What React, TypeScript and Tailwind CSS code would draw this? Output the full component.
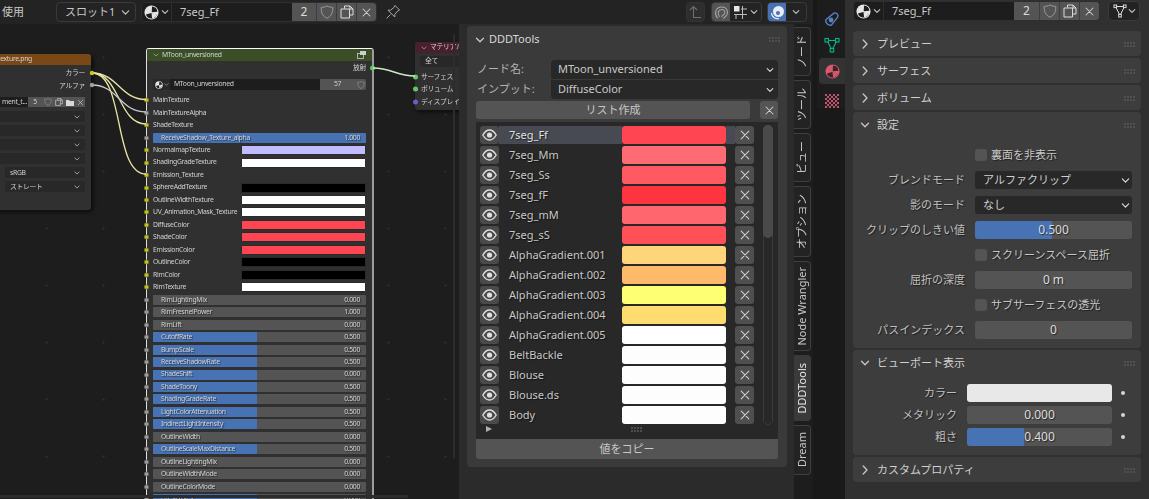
import React from "react";

const shadow = "[text-shadow:1px_1px_1px_rgba(0,0,0,0.55)]";

function MatIcon({ size = 16, light = "#e6e6e6", dark = "#1d1d1d" }: { size?: number; light?: string; dark?: string }) {
  return (
    <svg width={size} height={size} viewBox="0 0 16 16" className="shrink-0">
      <circle cx="8" cy="8" r="7.5" fill={light} />
      <path d="M8.2 7.8 L8.6 1.7 A6.3 6.3 0 0 1 14.3 7.2 Z" fill={dark} />
      <path d="M7.8 8.4 L13.6 10.6 A6.2 6.2 0 0 1 8 14.4 A6.4 6.4 0 0 1 2 10 Z" fill={dark} />
      <path d="M8 8.2 L13.6 10.4 A6.2 6.2 0 0 1 8.6 14.2 Z" fill={light} />
    </svg>
  );
}

function Chevron({ dir = "down", size = 10, color = "#c8c8c8", w = 1.3 }: { dir?: "down" | "right"; size?: number; color?: string; w?: number }) {
  return (
    <svg width={size} height={size} viewBox="0 0 10 10" className="shrink-0">
      <path d={dir === "down" ? "M1.5 3.2 L5 6.8 L8.5 3.2" : "M3.2 1 L7 5 L3.2 9"} fill="none" stroke={color} strokeWidth={w} strokeLinecap="round" strokeLinejoin="round" />
    </svg>
  );
}

function Cross({ size = 12, color = "#d0d0d0" }: { size?: number; color?: string }) {
  return (
    <svg width={size} height={size} viewBox="0 0 12 12" className="shrink-0">
      <path d="M2.2 2.2 L9.8 9.8 M9.8 2.2 L2.2 9.8" stroke={color} strokeWidth="1.1" strokeLinecap="round" />
    </svg>
  );
}

function Shield({ size = 14 }: { size?: number }) {
  return (
    <svg width={size} height={size} viewBox="0 0 14 14" className="shrink-0">
      <path d="M7 1 C5 2 3 2.4 1.2 2.4 C1.2 7 2 11 7 13.2 C12 11 12.8 7 12.8 2.4 C11 2.4 9 2 7 1 Z" fill="none" stroke="#9a9a9a" strokeWidth="1" />
    </svg>
  );
}

function CopyIcon({ size = 14 }: { size?: number }) {
  return (
    <svg width={size} height={size} viewBox="0 0 14 14" className="shrink-0">
      <path d="M4.5 3.5 V1 H10 L13 4 V10 H9.5 M10 1 V4 H13" fill="none" stroke="#dcdcdc" strokeWidth="1" />
      <path d="M1 4 H9.5 V13 H1 Z" fill="none" stroke="#dcdcdc" strokeWidth="1" />
    </svg>
  );
}

function Grip({ color = "#8c8c8c" }: { color?: string }) {
  return (
    <svg width="11" height="5" viewBox="0 0 11 5" className="shrink-0">
      {[0.5, 3.5, 6.5, 9.5].map((x) =>
        [0.5, 3.5].map((y) => <rect key={`${x}-${y}`} x={x} y={y} width="1" height="1" fill={color} />)
      )}
    </svg>
  );
}

function Eye() {
  return (
    <svg width="15" height="12" viewBox="0 0 15 12">
      <path d="M.8 6 C3 2.2 5.2 1 7.5 1 C9.8 1 12 2.2 14.2 6 C12 9.8 9.8 11 7.5 11 C5.2 11 3 9.8 .8 6 Z" fill="none" stroke="#e0e0e0" strokeWidth="1.3" />
      <circle cx="7.5" cy="6" r="2.6" fill="#e0e0e0" />
    </svg>
  );
}

function MaterialField({ name, widths }: { name: string; widths: [number, number] }) {
  return (
    <div className="flex h-[20px] items-stretch overflow-hidden rounded-[4px] border border-[#2e2e2e]">
      <div className="flex w-[30px] items-center justify-center gap-[2px] border-r border-[#2e2e2e] bg-[#1d1d1d]">
        <MatIcon size={15} />
        <Chevron size={8} />
      </div>
      <div className="flex items-center bg-[#1d1d1d] pl-[8px] text-[11px] text-[#c8c8c8]" style={{ width: widths[0] }}>{name}</div>
      <div className="flex items-center justify-center bg-[#545454] text-[12px] text-[#dcdcdc]" style={{ width: widths[1] }}>2</div>
      <div className="flex w-[20px] items-center justify-center border-l border-[#3d3d3d] bg-[#545454]"><Shield /></div>
      <div className="flex w-[20px] items-center justify-center border-l border-[#3d3d3d] bg-[#545454]"><CopyIcon /></div>
      <div className="flex w-[20px] items-center justify-center border-l border-[#3d3d3d] bg-[#545454]"><Cross size={11} /></div>
    </div>
  );
}

function Socket({ color }: { color: string }) {
  return <span className="absolute left-[-9.5px] top-1/2 h-[5px] w-[5px] -translate-y-1/2 rounded-full border border-[#00000055]" style={{ background: color }} />;
}

type NodeRow =
  | { k: "tex"; n: string; c: string }
  | { k: "col"; n: string; v: string }
  | { k: "sl"; n: string; v: string; f: number };

const Y = "#c7c729";
const G = "#a1a1a1";
const nodeRows: NodeRow[] = [
  { k: "tex", n: "MainTexture", c: Y },
  { k: "tex", n: "MainTextureAlpha", c: G },
  { k: "tex", n: "ShadeTexture", c: Y },
  { k: "sl", n: "ReceiveShadow_Texture_alpha", v: "1.000", f: 100 },
  { k: "col", n: "NormalmapTexture", v: "#c1bbff" },
  { k: "col", n: "ShadingGradeTexture", v: "#ffffff" },
  { k: "tex", n: "Emission_Texture", c: Y },
  { k: "col", n: "SphereAddTexture", v: "#000000" },
  { k: "col", n: "OutlineWidthTexture", v: "#ffffff" },
  { k: "col", n: "UV_Animation_Mask_Texture", v: "#ffffff" },
  { k: "col", n: "DiffuseColor", v: "#ff4552" },
  { k: "col", n: "ShadeColor", v: "#ff4552" },
  { k: "col", n: "EmissionColor", v: "#ff4552" },
  { k: "col", n: "OutlineColor", v: "#000000" },
  { k: "col", n: "RimColor", v: "#000000" },
  { k: "col", n: "RimTexture", v: "#ffffff" },
  { k: "sl", n: "RimLightingMix", v: "0.000", f: 0 },
  { k: "sl", n: "RimFresnelPower", v: "1.000", f: 0 },
  { k: "sl", n: "RimLift", v: "0.000", f: 0 },
  { k: "sl", n: "CutoffRate", v: "0.500", f: 49 },
  { k: "sl", n: "BumpScale", v: "0.500", f: 49 },
  { k: "sl", n: "ReceiveShadowRate", v: "0.500", f: 49 },
  { k: "sl", n: "ShadeShift", v: "0.000", f: 49 },
  { k: "sl", n: "ShadeToony", v: "0.500", f: 49 },
  { k: "sl", n: "ShadingGradeRate", v: "0.500", f: 49 },
  { k: "sl", n: "LightColorAttenuation", v: "0.500", f: 49 },
  { k: "sl", n: "IndirectLightIntensity", v: "0.500", f: 49 },
  { k: "sl", n: "OutlineWidth", v: "0.000", f: 0 },
  { k: "sl", n: "OutlineScaleMaxDistance", v: "0.500", f: 49 },
  { k: "sl", n: "OutlineLightingMix", v: "0.000", f: 0 },
  { k: "sl", n: "OutlineWidthMode", v: "0.000", f: 0 },
  { k: "sl", n: "OutlineColorMode", v: "0.000", f: 0 },
  { k: "sl", n: "UV_Scroll_X", v: "0.000", f: 49 },
];

const nodeText = "text-[6.8px] tracking-[-0.3px] text-[#d2d2d2] blur-[0.25px] whitespace-nowrap";

function NodeRowView({ r }: { r: NodeRow }) {
  if (r.k === "sl") {
    return (
      <div className="relative flex h-[12.47px] items-center">
        <Socket color={G} />
        <div className="relative flex h-[10px] w-full items-center justify-between overflow-hidden rounded-[1px] bg-[#545454] pl-[8px] pr-[6px]">
          <div className="absolute inset-y-0 left-0 bg-[#4772b3]" style={{ width: `${r.f}%` }} />
          <span className={`relative ${nodeText} ${shadow}`}>{r.n}</span>
          <span className={`relative ${nodeText} ${shadow}`}>{r.v}</span>
        </div>
      </div>
    );
  }
  if (r.k === "tex") {
    return (
      <div className="relative flex h-[12.47px] items-center">
        <Socket color={r.c} />
        <span className={nodeText}>{r.n}</span>
      </div>
    );
  }
  return (
    <div className="relative flex h-[12.47px] items-center justify-between">
      <Socket color={Y} />
      <span className={nodeText}>{r.n}</span>
      <div className="h-[10px] w-[125px] rounded-[1px] border border-[#2a2a2a]" style={{ background: r.v }} />
    </div>
  );
}

function MiniSelect({ text, className = "" }: { text?: string; className?: string }) {
  return (
    <div className={`flex h-[11px] items-center justify-between rounded-[2px] bg-[#282828] px-[5px] ${className}`}>
      <span className={nodeText}>{text}</span>
      <Chevron size={6} w={1.2} />
    </div>
  );
}

function Canvas() {
  return (
    <div className="relative flex-1 overflow-hidden bg-[#1d1d1d] bg-[radial-gradient(#2b2b2b_1px,transparent_1.2px)] bg-[size:57px_57px] bg-[position:18px_5px]">
      {/* image node */}
      <div className="absolute left-[-60px] top-[30px] h-[156px] w-[151px] overflow-hidden rounded-[3px] bg-[#303030] shadow-[2px_2px_4px_rgba(0,0,0,0.6)]">
        <div className="flex h-[11px] items-center justify-end bg-[#7a4716] pr-[59px]">
          <span className={nodeText}>_texture.png</span>
        </div>
        <div className="flex flex-col items-end pr-[6px] pt-[2px]">
          <div className={`flex h-[12.5px] items-center ${nodeText}`}>カラー</div>
          <div className={`flex h-[12.5px] items-center ${nodeText}`}>アルファ</div>
        </div>
        <div className="mt-[5px] flex h-[10px] items-stretch pl-[20px] pr-[6px]">
          <div className={`flex flex-1 items-center justify-end bg-[#1d1d1d] pr-[1px] ${nodeText}`}>ment_t...</div>
          <div className={`flex w-[14px] items-center justify-center bg-[#545454] ${nodeText}`}>5</div>
          <div className="flex w-[11px] items-center justify-center bg-[#545454]"><Shield size={8} /></div>
          <div className="flex w-[11px] items-center justify-center bg-[#545454]"><CopyIcon size={8} /></div>
          <div className="flex w-[11px] items-center justify-center bg-[#545454]">
            <svg width="8" height="7" viewBox="0 0 8 7"><path d="M0 1 H3 L4 2 H8 V7 H0 Z" fill="#d8d8d8" /></svg>
          </div>
          <div className="flex w-[10px] items-center justify-center bg-[#545454]"><Cross size={7} /></div>
        </div>
        <div className="mt-[4px] flex flex-col gap-[3.1px] pl-[20px] pr-[6px]">
          <MiniSelect />
          <MiniSelect />
          <MiniSelect />
          <MiniSelect />
          <MiniSelect text="sRGB" className="ml-[45px]" />
          <MiniSelect text="ストレート" className="ml-[45px]" />
        </div>
      </div>

      {/* main node */}
      <div className="absolute left-[146px] top-[24px] h-[600px] w-[228px] rounded-t-[3px] border-l border-r-2 border-t border-l-[#e0e0e0] border-r-[#9c9c9c] border-t-white bg-[#303030]">
        <div className="flex h-[12px] items-center gap-[3px] rounded-t-[2px] bg-[#3b4f27] px-[6px]">
          <Chevron size={6} w={1} />
          <span className={nodeText}>MToon_unversioned</span>
          <svg width="9" height="8" viewBox="0 0 9 8" className="ml-auto">
            <rect x="0.5" y="2.5" width="6" height="5" fill="none" stroke="#cfcfcf" strokeWidth="0.8" />
            <rect x="3" y="0" width="6" height="4" fill="#cfcfcf" />
          </svg>
        </div>
        <div className="flex flex-col pl-[6px] pr-[6px]">
          <div className="relative flex h-[13px] items-center justify-end pt-[1px]">
            <span className={nodeText}>放射</span>
            <span className="absolute right-[-9px] top-1/2 h-[5px] w-[5px] -translate-y-1/2 rounded-full bg-[#63c763]" />
          </div>
          <div className="mb-[4px] mt-[5px] flex h-[11px] items-stretch overflow-hidden rounded-[2px]">
            <div className="flex w-[17px] items-center justify-center gap-[1px] bg-[#282828]">
              <MatIcon size={8} />
              <Chevron size={5} w={1} />
            </div>
            <div className={`flex flex-1 items-center bg-[#1d1d1d] pl-[4px] ${nodeText}`}>MToon_unversioned</div>
            <div className={`flex w-[35px] items-center justify-center bg-[#545454] ${nodeText}`}>57</div>
            <div className="flex w-[11px] items-center justify-center bg-[#545454]"><Shield size={8} /></div>
          </div>
          {nodeRows.map((r) => <NodeRowView key={r.n} r={r} />)}
        </div>
      </div>

      {/* material output node */}
      <div className="absolute left-[415px] top-[18px] h-[68px] w-[80px] rounded-[3px] bg-[#303030] shadow-[2px_2px_4px_rgba(0,0,0,0.6)]">
        <div className="flex h-[11px] items-center gap-[3px] rounded-t-[3px] bg-[#4a1f2c] px-[6px]">
          <Chevron size={6} w={1} />
          <span className={nodeText}>マテリアル出力</span>
        </div>
        <div className="mt-[3px] pl-[5px]"><MiniSelect text="全て" /></div>
        <div className="mt-[3.5px] flex flex-col pl-[6px]">
          {[["サーフェス", "#63c763"], ["ボリューム", "#63c763"], ["ディスプレイス", "#6363c7"]].map(([t, c]) => (
            <div key={t} className="relative flex h-[12.5px] items-center">
              <span className={nodeText}>{t}</span>
              <span className="absolute left-[-8.5px] top-1/2 h-[5px] w-[5px] -translate-y-1/2 rounded-full" style={{ background: c }} />
            </div>
          ))}
        </div>
      </div>

      {/* links */}
      <svg className="pointer-events-none absolute left-0 top-[-24px]" width="460" height="499" fill="none">
        <g stroke="#e9e5a5" strokeWidth="1.3">
          <path d="M92 73 C118 73 120 99.5 146 99.5" />
          <path d="M92 73 C120 73 118 124 146 124" />
          <path d="M92 73 C125 73 113 174 146 174" />
        </g>
        <path d="M92 85 C118 85 120 112 146 112" stroke="#c9c9c9" strokeWidth="1.3" />
        <path d="M373 68 C392 68 396 76 415 76" stroke="#cdeac8" strokeWidth="1.4" />
        <circle cx="92" cy="73" r="2.2" fill={Y} />
        <circle cx="92" cy="85" r="2.2" fill={G} />
      </svg>

      {/* canvas scrollbars */}
      <div className="absolute bottom-[1px] left-0 h-[3px] w-[408px] bg-[#2c2c2c]" />
      <div className="absolute left-[453px] top-[10px] h-[424px] w-[2px] bg-[#2c2c2c]" />
    </div>
  );
}

function Btn({ w, children, className = "" }: { w: number; children: React.ReactNode; className?: string }) {
  return <div className={`flex items-center justify-center ${className}`} style={{ width: w }}>{children}</div>;
}

function NodeHeader() {
  return (
    <div className="flex h-[24px] items-center bg-[#232323] text-[11px] text-[#c8c8c8]">
      <span className="ml-[2px] w-[54px] text-[11px]">使用</span>
      <div className="flex h-[20px] w-[80px] items-center justify-between rounded-[4px] border border-[#3a3a3a] bg-[#232323] pl-[8px] pr-[5px]">
        <span>スロット1</span>
        <Chevron size={9} />
      </div>
      <div className="ml-[5px]">
        <MaterialField name="7seg_Ff" widths={[120, 24]} />
      </div>
      <div className="ml-[8px] w-[16px]">
        <svg width="16" height="16" viewBox="0 0 16 16" fill="none" stroke="#a8a8a8" strokeWidth="1">
          <path d="M10 1.5 L14.5 6 L12.8 6.8 L9.8 10.5 L9.8 13 L3 6.2 L5.5 6.2 L9.2 3.2 Z M5.5 10.5 L1.5 14.5" />
        </svg>
      </div>
      <div className="ml-auto flex items-center pr-[6px]">
        <div className="flex h-[20px] w-[19px] items-center justify-center rounded-[4px] border border-[#333] bg-[#2e2e2e]">
          <svg width="13" height="14" viewBox="0 0 13 14" fill="none" stroke="#6f6f6f" strokeWidth="1.1"><path d="M1 5 L4.5 1.5 L8 5 M4.5 1.5 V12.5 H12" /></svg>
        </div>
        <div className="ml-[6px] flex h-[20px] w-[51px] items-stretch overflow-hidden rounded-[4px] border border-[#3a3a3a]">
          <Btn w={18} className="bg-[#545454]">
            <svg width="15" height="15" viewBox="0 0 15 15" fill="none" strokeLinecap="butt">
              <path d="M4.5 12.5 C1.5 8.5 2.8 3.2 7.8 3.2 C12.4 3.2 13.2 8 10.8 10.4 L8.4 12.6" stroke="#a8a8a8" strokeWidth="3.6" />
              <path d="M4.5 12.5 C1.5 8.5 2.8 3.2 7.8 3.2 C12.4 3.2 13.2 8 10.8 10.4 L8.4 12.6" stroke="#545454" strokeWidth="1.6" />
            </svg>
          </Btn>
          <div className="flex flex-1 items-center justify-center gap-[2px]">
            <svg width="15" height="15" viewBox="0 0 15 15"><rect x="1" y="1" width="5.5" height="5.5" fill="#e6e6e6" /><path d="M9.5 1 V14 M3 9 V14 M1 9.5 H14 M8 4 H14" stroke="#bcbcbc" strokeWidth="1" /></svg>
            <Chevron size={8} />
          </div>
        </div>
        <div className="ml-[5px] flex h-[20px] w-[40px] items-stretch overflow-hidden rounded-[4px] border border-[#3a3a3a]">
          <Btn w={18} className="bg-[#4772b3]">
            <svg width="15" height="15" viewBox="0 0 15 15"><circle cx="8.5" cy="6.5" r="5.5" fill="#e8eef8" /><circle cx="8" cy="8" r="2" fill="#4772b3" /><path d="M1.5 8 A6 6 0 0 0 9 13.5" fill="none" stroke="#e8eef8" strokeWidth="1.2" /></svg>
          </Btn>
          <div className="flex flex-1 items-center justify-center"><Chevron size={8} /></div>
        </div>
      </div>
    </div>
  );
}

const mats: [string, string][] = [
  ["7seg_Ff", "#ff4552"],
  ["7seg_Mm", "#ff6b72"],
  ["7seg_Ss", "#ff5a61"],
  ["7seg_fF", "#ff3441"],
  ["7seg_mM", "#ff666d"],
  ["7seg_sS", "#ff5058"],
  ["AlphaGradient.001", "#ffd57a"],
  ["AlphaGradient.002", "#ffb96b"],
  ["AlphaGradient.003", "#ffff73"],
  ["AlphaGradient.004", "#ffdc6e"],
  ["AlphaGradient.005", "#ffffff"],
  ["BeltBackle", "#fdfdfd"],
  ["Blouse", "#fdfdfd"],
  ["Blouse.ds", "#fdfdfd"],
  ["Body", "#fdfdfd"],
];

function DropField({ text, rounded }: { text: string; rounded: string }) {
  return (
    <div className={`flex h-[19px] flex-1 items-center justify-between bg-[#282828] pl-[7px] pr-[4px] text-[11px] text-[#c8c8c8] ${rounded}`}>
      <span>{text}</span>
      <Chevron size={8} color="#dcdcdc" />
    </div>
  );
}

function DDDPanel() {
  return (
    <div className="flex h-[441px] w-[320px] flex-col rounded-[4px] bg-[#3a3a3a] px-[9px] text-[11px] text-[#c8c8c8]">
      <div className="flex h-[26px] items-center pt-[1px]">
        <span className="ml-[-1px] mr-[4px]"><Chevron size={10} /></span>
        <span className="text-[#d8d8d8]">DDDTools</span>
        <span className="ml-auto mr-[-2px]"><Grip /></span>
      </div>
      <div className="mt-[8px] flex flex-col gap-[1px]">
        <div className="flex items-center">
          <span className="w-[75px] pl-[1px] text-[#b4b4b4]">ノード名:</span>
          <DropField text="MToon_unversioned" rounded="rounded-t-[4px]" />
        </div>
        <div className="flex items-center">
          <span className="w-[75px] pl-[1px] text-[#b4b4b4]">インプット:</span>
          <DropField text="DiffuseColor" rounded="rounded-b-[4px]" />
        </div>
      </div>
      <div className="mt-[2px] flex h-[18px] gap-[10px]">
        <div className="flex flex-1 items-center justify-center rounded-[3px] bg-[#545454] text-[#c8c8c8]">リスト作成</div>
        <div className="flex w-[18px] items-center justify-center rounded-[3px] bg-[#545454]"><Cross size={11} /></div>
      </div>
      <div className="relative mt-[3px] h-[317px] bg-[#282828] pl-[4px] pt-[4px]">
        <div className="flex w-[275px] flex-col gap-[2px]">
          {mats.map(([n, c], i) => (
            <div key={n} className="flex h-[18px] items-stretch">
              <div className="flex w-[19px] items-center justify-center rounded-[3px] bg-[#4a4a4a]"><Eye /></div>
              <div className={`flex w-[123px] items-center pl-[10px] ${shadow} ${i === 0 ? "bg-[#474a52] text-[#e0e0e0]" : ""}`}>{n}</div>
              <div className="w-[104px] rounded-[3px]" style={{ background: c }} />
              <div className={`w-[9px] ${i === 0 ? "bg-[#474a52]" : ""}`} />
              <div className="flex w-[19px] items-center justify-center rounded-[3px] bg-[#4f4f4f]"><Cross size={12} /></div>
            </div>
          ))}
        </div>
        <div className="absolute left-[287px] top-[3px] h-[300px] w-[10px] rounded-full border border-[#3a3a3a]">
          <div className="absolute inset-x-[-1px] top-[-1px] h-[113px] rounded-full bg-[#4a4a4a]" />
        </div>
        <div className="absolute left-[10px] top-[304px] h-0 w-0 border-y-[3px] border-l-[6px] border-y-transparent border-l-[#b0b0b0]" />
        <div className="absolute left-[155px] top-[305px]"><Grip color="#c0c0c0" /></div>
      </div>
      <div className="flex h-[20px] items-center justify-center rounded-b-[3px] bg-[#545454]">値をコピー</div>
    </div>
  );
}

const tabs: [string, number, boolean][] = [
  ["ノード", 49, false],
  ["ツール", 49, false],
  ["ビュー", 49, false],
  ["オプション", 71, false],
  ["Node Wrangler", 90, false],
  ["DDDTools", 66, true],
  ["Dream", 50, false],
];

function SideTabs() {
  return (
    <div className="flex w-[18px] shrink-0 flex-col gap-[4px] pt-[3px]">
      {tabs.map(([t, h, active]) => (
        <div
          key={t}
          style={{ height: h }}
          className={`flex w-[17px] items-center justify-center rounded-r-[4px] border-y border-r text-[11px] ${active ? "border-[#3a3a3a] bg-[#3a3a3a] text-[#e6e6e6]" : "border-[#3f3f3f] bg-[#232323] text-[#c8c8c8]"}`}
        >
          <span className="rotate-180 whitespace-nowrap [writing-mode:vertical-rl] [text-orientation:sideways]">{t}</span>
        </div>
      ))}
    </div>
  );
}

function PropTabs() {
  const cells = [0, 1, 2, 3, 4, 5, 6];
  return (
    <div className="flex w-[28px] shrink-0 flex-col items-end bg-[#1d1d1d] pt-[6px]">
      <div className="flex h-[26px] w-[26px] items-center justify-center">
        <svg width="16" height="16" viewBox="0 0 16 16" fill="none" stroke="#5680c2" strokeWidth="1.4">
          <path d="M2 8.5 L10 2.2 C12 1 14.8 3.6 13.8 6 L7.5 14 C5 15.2 .8 12 2 8.5 Z" />
          <circle cx="7" cy="9" r="2.4" fill="#5680c2" stroke="none" />
        </svg>
      </div>
      <div className="flex h-[26px] w-[26px] items-center justify-center">
        <svg width="16" height="16" viewBox="0 0 16 16" fill="none" stroke="#00b88a" strokeWidth="1.1">
          <path d="M3 3.5 H13 L8 13 Z" />
          <rect x="1" y="1.5" width="3.5" height="3.5" fill="#1d1d1d" />
          <rect x="11.5" y="1.5" width="3.5" height="3.5" fill="#1d1d1d" />
          <rect x="6.2" y="11.5" width="3.5" height="3.5" fill="#1d1d1d" />
        </svg>
      </div>
      <div className="flex h-[26px] w-[26px] items-center justify-center rounded-l-[4px] bg-[#333333]">
        <MatIcon size={15} light="#d8596b" dark="#3a2228" />
      </div>
      <div className="mt-[10px] flex h-[14px] w-[26px] items-center justify-center">
        <svg width="14" height="14" viewBox="0 0 14 14" shapeRendering="crispEdges">
          <rect width="14" height="14" fill="#b9566a" />
          {cells.map((y) => cells.filter((x) => (x + y) % 2 === 1).map((x) => (
            <rect key={`${x}-${y}`} x={x * 2} y={y * 2} width="2" height="2" fill="#2a1a1e" />
          )))}
        </svg>
      </div>
    </div>
  );
}

function PanelHead({ t, open }: { t: string; open?: boolean }) {
  return (
    <div className="flex h-[25px] items-center pl-[7px] pr-[6px] pt-[1px] text-[11px] text-[#d0d0d0]">
      <span className="flex w-[15px]"><Chevron dir={open ? "down" : "right"} size={10} /></span>
      <span className="ml-[2px]">{t}</span>
      <span className="ml-auto"><Grip /></span>
    </div>
  );
}

function Label({ children }: { children: React.ReactNode }) {
  return <div className={`flex h-[18px] items-center justify-end text-[11px] text-[#c0c0c0] ${shadow}`}>{children}</div>;
}

function Check({ t }: { t: string }) {
  return (
    <div className="flex h-[18px] items-center gap-[4px] text-[11px] text-[#c8c8c8]">
      <span className="h-[12px] w-[12px] rounded-[3px] bg-[#545454]" />
      <span className={shadow}>{t}</span>
    </div>
  );
}

function Select({ t }: { t: string }) {
  return (
    <div className="flex h-[18px] items-center justify-between rounded-[3px] bg-[#282828] pl-[8px] pr-[2px] text-[11px] text-[#d0d0d0]">
      <span>{t}</span>
      <Chevron size={9} color="#dcdcdc" />
    </div>
  );
}

function Slider({ v, f = 0 }: { v: string; f?: number }) {
  return (
    <div className="relative flex h-[18px] items-center justify-center overflow-hidden rounded-[3px] bg-[#545454] text-[12px] text-[#dcdcdc]">
      <div className="absolute inset-y-0 left-0 bg-[#4772b3]" style={{ width: `${f}%` }} />
      <span className={`relative ${shadow}`}>{v}</span>
    </div>
  );
}

function Dot() {
  return <span className="ml-[-1px] h-[4px] w-[4px] rounded-full bg-[#d4d4d4]" />;
}

function Properties() {
  return (
    <div className="flex w-[304px] flex-col bg-[#303030] px-[8px]">
      <div className="flex h-[31px] items-start gap-[8px] pt-[1px]">
        <MaterialField name="7seg_Ff" widths={[130, 25]} />
        <div className="flex h-[20px] w-[32px] items-center justify-center gap-[1px] rounded-[4px] border border-[#3a3a3a] bg-[#232323]">
          <svg width="14" height="14" viewBox="0 0 14 14" fill="none" stroke="#dcdcdc" strokeWidth="1">
            <path d="M2.5 2.5 H11.5 L7 11.5 Z" />
            <rect x="1" y="1" width="2.6" height="2.6" fill="#232323" />
            <rect x="10.4" y="1" width="2.6" height="2.6" fill="#232323" />
            <rect x="5.7" y="10.4" width="2.6" height="2.6" fill="#232323" />
          </svg>
          <Chevron size={8} />
        </div>
      </div>
      <div className="flex flex-col gap-[2px]">
        <div className="rounded-[4px] bg-[#3d3d3d]"><PanelHead t="プレビュー" /></div>
        <div className="rounded-[4px] bg-[#3d3d3d]"><PanelHead t="サーフェス" /></div>
        <div className="rounded-[4px] bg-[#3d3d3d]"><PanelHead t="ボリューム" /></div>
        <div className="rounded-[4px] bg-[#3d3d3d]">
          <PanelHead t="設定" open />
          <div className="grid grid-cols-[112px_157px] gap-x-[10px] gap-y-[7px] py-[9px]">
            <div />
            <Check t="裏面を非表示" />
            <Label>ブレンドモード</Label>
            <Select t="アルファクリップ" />
            <Label>影のモード</Label>
            <Select t="なし" />
            <Label>クリップのしきい値</Label>
            <Slider v="0.500" f={49} />
            <div />
            <Check t="スクリーンスペース屈折" />
            <Label>屈折の深度</Label>
            <Slider v="0 m" />
            <div />
            <Check t="サブサーフェスの透光" />
            <Label>パスインデックス</Label>
            <Slider v="0" />
          </div>
        </div>
        <div className="rounded-[4px] bg-[#3d3d3d]">
          <PanelHead t="ビューポート表示" open />
          <div className="grid grid-cols-[104px_145px_4px] items-center gap-x-[10px] gap-y-[4px] py-[9px]">
            <Label>カラー</Label>
            <div className="h-[18px] rounded-[3px] bg-[#e8e8e8]" />
            <Dot />
            <Label>メタリック</Label>
            <Slider v="0.000" />
            <Dot />
            <Label>粗さ</Label>
            <Slider v="0.400" f={39} />
            <Dot />
          </div>
        </div>
        <div className="rounded-[4px] bg-[#3d3d3d]"><PanelHead t="カスタムプロパティ" /></div>
      </div>
    </div>
  );
}

export default function App() {
  return (
    <div className="flex h-[499px] w-[1149px] overflow-hidden bg-[#191919] font-['Noto_Sans','Noto_Sans_CJK_JP',sans-serif]">
      <div className="relative flex w-[813px] flex-col">
        <NodeHeader />
        <Canvas />
        <div className="absolute bottom-0 left-[459px] top-[24px] flex w-[354px] items-start bg-[#2b2b2b]">
          <div className="ml-[8px] mt-[2px]"><DDDPanel /></div>
          <div className="ml-[7px] h-full bg-[#1d1d1d]"><SideTabs /></div>
          <div className="h-full flex-1 bg-[#1d1d1d]" />
        </div>
      </div>
      <div className="ml-[4px]"><PropTabs /></div>
      <Properties />
    </div>
  );
}
